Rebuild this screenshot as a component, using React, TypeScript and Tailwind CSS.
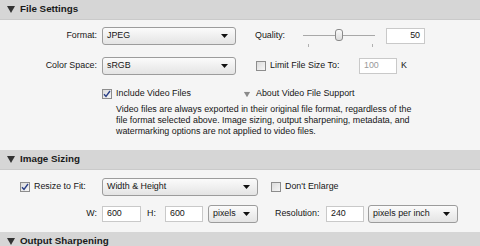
import React from "react";

const Tri = ({ className = "" }: { className?: string }) => (
  <svg width="8" height="7" viewBox="0 0 8 7" className={className}>
    <polygon points="0,0 8,0 4,7" fill="currentColor" />
  </svg>
);

const Header = ({ title }: { title: string }) => (
  <div className="h-[20px] bg-[#d6d6d6] flex items-center pl-[7px] border-b border-[#cacaca]">
    <Tri className="text-[#333] mr-[5px]" />
    <span className="font-bold text-[9.8px] text-[#1a1a1a]">{title}</span>
  </div>
);

const Select = ({ value, w }: { value: string; w: string }) => (
  <div
    className={`${w} h-[18px] rounded-[3px] border border-[#9c9c9c] bg-gradient-to-b from-[#fbfbfb] to-[#e4e4e4] flex items-center justify-between pl-[4px] pr-[7px]`}
  >
    <span>{value}</span>
    <svg width="7" height="4" viewBox="0 0 7 4">
      <polygon points="0,0 7,0 3.5,4" fill="#111" />
    </svg>
  </div>
);

const Input = ({ value, w, right = false, gray = false }: { value: string; w: string; right?: boolean; gray?: boolean }) => (
  <div
    className={`${w} h-[16px] bg-white border border-[#c9c9c9] flex items-center px-[4px] ${right ? "justify-end" : ""} ${gray ? "text-[#9a9a9a]" : ""}`}
  >
    {value}
  </div>
);

const Check = ({ checked }: { checked: boolean }) => (
  <div className="w-[10px] h-[10px] border border-[#8d8d8d] bg-gradient-to-br from-[#dcdcdc] to-[#f6f6f6] flex items-center justify-center">
    {checked && (
      <svg width="8" height="8" viewBox="0 0 8 8">
        <path d="M1 4.2 L3 6.5 L7 1" stroke="#2a3f86" strokeWidth="1.4" fill="none" />
      </svg>
    )}
  </div>
);

export default function App() {
  return (
    <div className="w-[480px] h-[246px] overflow-hidden bg-[#f5f5f5] font-['Liberation_Sans',Arial,sans-serif] text-[8.9px] text-[#161616]">
      <Header title="File Settings" />
      {/* Row 1 */}
      <div className="mt-[7px] h-[18px] flex items-center">
        <div className="w-[97px] text-right">Format:</div>
        <div className="ml-[5px]">
          <Select value="JPEG" w="w-[134px]" />
        </div>
        <div className="ml-[19px] w-[48px]">Quality:</div>
        <div className="relative w-[72px] h-[18px]">
          <div className="absolute left-0 right-0 top-[8px] h-px bg-[#a8a8a8]" />
          <div className="absolute left-[32px] top-[2px] w-[8px] h-[12px] rounded-[3px] border border-[#8a8a8a] bg-gradient-to-b from-[#fafafa] to-[#dcdcdc]" />
          <div className="absolute left-[5px] top-[17px] w-px h-[3px] bg-[#b0b0b0]" />
          <div className="absolute left-[69px] top-[17px] w-px h-[3px] bg-[#b0b0b0]" />
        </div>
        <div className="ml-[11px]">
          <Input value="50" w="w-[39px]" right />
        </div>
      </div>
      {/* Row 2 */}
      <div className="mt-[12px] h-[18px] flex items-center">
        <div className="w-[97px] text-right">Color Space:</div>
        <div className="ml-[5px]">
          <Select value="sRGB" w="w-[134px]" />
        </div>
        <div className="ml-[20px] w-[103px] flex items-center">
          <Check checked={false} />
          <span className="ml-[4px]">Limit File Size To:</span>
        </div>
        <Input value="100" w="w-[38px]" gray />
        <span className="ml-[4px]">K</span>
      </div>
      {/* Row 3 */}
      <div className="mt-[12px] h-[14px] flex items-center pl-[102px]">
        <div className="w-[141px] flex items-center">
          <Check checked />
          <span className="ml-[4px]">Include Video Files</span>
        </div>
        <Tri className="text-[#8a8a8a] scale-[0.8]" />
        <span className="ml-[5px]">About Video File Support</span>
      </div>
      <div className="mt-[3px] pl-[116px] leading-[11px] whitespace-nowrap">
        <div>Video files are always exported in their original file format, regardless of the</div>
        <div>file format selected above. Image sizing, output sharpening, metadata, and</div>
        <div>watermarking options are not applied to video files.</div>
      </div>
      <div className="mt-[13px]">
        <Header title="Image Sizing" />
      </div>
      {/* Resize row */}
      <div className="mt-[8px] h-[18px] flex items-center">
        <div className="ml-[20px] w-[82px] flex items-center">
          <Check checked />
          <span className="ml-[4px]">Resize to Fit:</span>
        </div>
        <Select value="Width & Height" w="w-[156px]" />
        <div className="ml-[13px] flex items-center">
          <Check checked={false} />
          <span className="ml-[4px]">Don't Enlarge</span>
        </div>
      </div>
      {/* W row */}
      <div className="mt-[9px] h-[18px] flex items-center">
        <div className="w-[97px] text-right">W:</div>
        <div className="ml-[5px]">
          <Input value="600" w="w-[39px]" />
        </div>
        <div className="ml-[6px] w-[18px]">H:</div>
        <Input value="600" w="w-[38px]" />
        <div className="ml-[5px]">
          <Select value="pixels" w="w-[50px]" />
        </div>
        <div className="ml-[17px] w-[51px]">Resolution:</div>
        <Input value="240" w="w-[38px]" />
        <div className="ml-[4px]">
          <Select value="pixels per inch" w="w-[90px]" />
        </div>
      </div>
      <div className="mt-[9px]">
        <Header title="Output Sharpening" />
      </div>
    </div>
  );
}
